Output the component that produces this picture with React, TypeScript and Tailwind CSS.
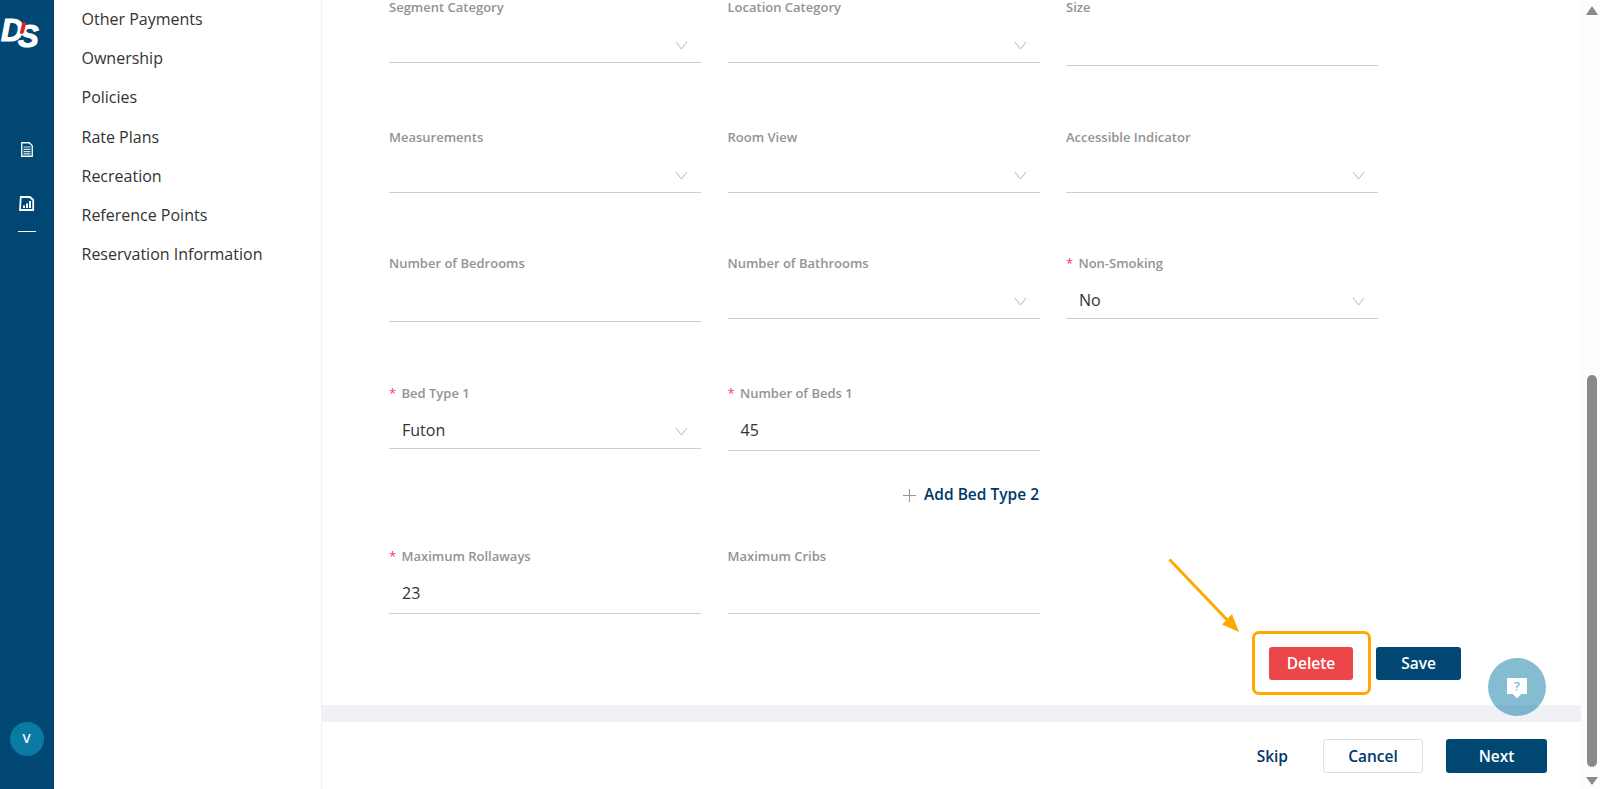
import { Plus } from "lucide-react";

type FieldProps = {
    label: string;
    value?: string;
    select?: boolean;
    required?: boolean;
    tall?: boolean;
};

const navItems = ["Other Payments", "Ownership", "Policies", "Rate Plans", "Recreation", "Reference Points", "Reservation Information"];

function Chevron() {
    return (
        <svg width="13" height="9" viewBox="0 0 13 9" fill="none" className="absolute right-[13px] top-[23px]">
            <path d="M1 1l5.500 7L12 1" stroke="#b5b5b5" strokeWidth="1" />
        </svg>
    );
}

function Field({ label, value, select, required, tall }: FieldProps) {
    return (
        <div className="min-w-0">
            <div className="h-5 flex items-center text-[13px] font-semibold text-[#939393]">
                {required && <span className="w-[12.5px] text-[#f5405c] text-[13px] font-normal">*</span>}
                {label}
            </div>
            <div className={`relative ${select ? "h-[45px]" : tall ? "h-[48px]" : "h-[47px]"} border-b border-[#cfcfcf] pl-[13px] pt-[15px] text-[16px] leading-[22px] text-[#333333]`}>
                {value}
                {select && <Chevron />}
            </div>
        </div>
    );
}

function FormRow({ children, className }: { children: React.ReactNode; className: string }) {
    return <div className={`grid grid-cols-[312px_312px_312px] gap-x-[26.5px] items-start ${className}`}>{children}</div>;
}

function DocIcon() {
    return (
        <svg width="12" height="15" viewBox="0 0 12 15">
            <path d="M.75.75h7.500l3 3v10.500H.75z" fill="#004873" stroke="#ffffff" strokeWidth="1.3" />
            <path d="M2.500 5h7M2.500 7.300h7M2.500 9.600h7M2.500 11.900h7" stroke="#dce8ef" strokeWidth="1.200" />
        </svg>
    );
}

function ChartIcon() {
    return (
        <svg width="16" height="15" viewBox="0 0 16 15">
            <path d="M1.800 1h9l3.400 3v10H1z" fill="none" stroke="#ffffff" strokeWidth="1.800" />
            <path d="M4 12V9.500h2V12zM7 12V7.500h2V12zM10 12V5h2v7z" fill="#ffffff" />
        </svg>
    );
}

export default function App() {
    return (
        <div className="relative flex h-[789px] w-[1600px] overflow-hidden bg-white font-['Open_Sans',sans-serif]">
            <aside className="flex h-full w-[54px] shrink-0 flex-col items-center border-r border-[#0d3563] bg-[#004873]">
                <div className="relative mt-[12px] h-[38px] w-full font-['Liberation_Sans',sans-serif] text-[31px] font-bold italic leading-none text-white [-webkit-text-stroke:1.2px_white]">
                    <span className="absolute left-[1px] top-[3px]">D</span>
                    <span className="absolute left-[18px] top-[9px]">S</span>
                    <span className="absolute left-[21px] top-[10px] h-[12px] w-[4px] skew-x-[-14deg] rounded-full bg-[#e0202f]" />
                </div>
                <div className="mt-[92px]"><DocIcon /></div>
                <div className="mt-[39px]"><ChartIcon /></div>
                <div className="mt-[20px] h-px w-[18px] bg-white" />
                <div className="mt-auto mb-[33px] flex h-[34px] w-[34px] items-center justify-center rounded-full bg-[#097ba3] text-[13px] font-semibold text-white">V</div>
            </aside>

            <nav className="-mt-[1px] h-[790px] w-[268px] shrink-0 border-r border-[#f0f0f0] pl-[27.5px]">
                {navItems.map((item) => (
                    <div key={item} className="flex h-[39.3px] items-center text-[16px] text-[#333333]">{item}</div>
                ))}
            </nav>

            <main className="flex h-full w-[1259px] shrink-0 flex-col">
                <div className="flex-1 overflow-hidden pl-[67px]">
                    <div className="-mt-[2px]">
                        <FormRow className="h-[130px]">
                            <Field label="Segment Category" select />
                            <Field label="Location Category" select />
                            <Field label="Size" tall />
                        </FormRow>
                        <FormRow className="h-[126px]">
                            <Field label="Measurements" select />
                            <Field label="Room View" select />
                            <Field label="Accessible Indicator" select />
                        </FormRow>
                        <FormRow className="h-[130px]">
                            <Field label="Number of Bedrooms" tall />
                            <Field label="Number of Bathrooms" select />
                            <Field label="Non-Smoking" value="No" select required />
                        </FormRow>
                        <FormRow className="h-[68px]">
                            <Field label="Bed Type 1" value="Futon" select required />
                            <Field label="Number of Beds 1" value="45" required />
                        </FormRow>
                        <div className="mb-[40px] mt-[31px] flex h-6 w-[650px] items-center justify-end gap-[4px] text-[15.5px] font-semibold text-[#00386b]">
                            <Plus size={21} strokeWidth={1} color="#7f8a99" />
                            Add Bed Type 2
                        </div>
                        <FormRow className="h-[68px]">
                            <Field label="Maximum Rollaways" value="23" required />
                            <Field label="Maximum Cribs" />
                        </FormRow>
                        <div className="mt-[32px] flex w-[1072px] justify-end gap-[23px]">
                            <button className="h-[33px] w-[84px] rounded-[3px] bg-[#eb4649] text-[15.5px] font-semibold text-white">Delete</button>
                            <button className="h-[33px] w-[85px] rounded-[3px] bg-[#004873] text-[15.5px] font-semibold text-white">Save</button>
                        </div>
                    </div>
                </div>
                <div className="h-[17px] shrink-0 bg-[#f0f1f5]" />
                <footer className="flex h-[67px] shrink-0 items-start justify-end pt-[17px] pr-[34px]">
                    <button className="mr-[35px] h-[34px] pt-[1px] text-[15.5px] font-semibold text-[#00386b]">Skip</button>
                    <button className="mr-[23px] h-[34px] w-[100px] rounded-[3px] border border-[#dfdfdf] pt-[1px] text-[15.5px] font-semibold text-[#00386b]">Cancel</button>
                    <button className="h-[34px] w-[101px] rounded-[3px] bg-[#004873] pt-[1px] text-[15.5px] font-semibold text-white">Next</button>
                </footer>
            </main>

            <div className="flex h-full w-[19px] shrink-0 flex-col items-center bg-[#fdfdfd] pl-[3px]">
                <svg width="12" height="9" viewBox="0 0 12 9" className="mt-[6px] shrink-0"><path d="M6 0l6 9H0z" fill="#8a8a8a" /></svg>
                <div className="mt-auto h-[392px] w-[10px] shrink-0 rounded-[5px] bg-[#8a8a8a]" />
                <svg width="12" height="8" viewBox="0 0 12 8" className="mb-[4px] mt-[10px] shrink-0"><path d="M6 8L12 0H0z" fill="#8a8a8a" /></svg>
            </div>

            <div className="absolute left-[1252px] top-[631px] h-[64px] w-[119px] rounded-[7px] border-[3px] border-[#ffa800]" />
            <svg width="90" height="90" viewBox="0 0 90 90" className="absolute left-[1160px] top-[550px]">
                <path d="M9.500 9.500L72 75" stroke="#ffa800" strokeWidth="3" fill="none" />
                <path d="M79 82L62 74.500L72 64z" fill="#ffa800" />
            </svg>
            <div className="absolute left-[1488px] top-[657.500px] flex h-[58px] w-[58px] items-center justify-center rounded-full bg-[#0a7ba3]/50">
                <div className="relative -mt-[1px] flex h-[16px] w-[20px] items-center justify-center bg-white text-[13px] font-semibold leading-none text-[#84bbce]">
                    ?
                    <span className="absolute -bottom-[3px] left-[7px] h-[6px] w-[6px] rotate-45 bg-white" />
                </div>
            </div>
        </div>
    );
}
